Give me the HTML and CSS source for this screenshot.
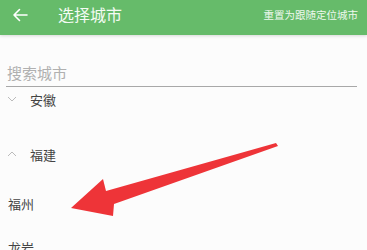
FILE: index.html
```html
<!DOCTYPE html>
<html lang="zh">
<head>
<meta charset="utf-8">
<link rel="stylesheet" href="styles.css">
</head>
<body>
<div class="app">
  <header class="bar">
    <svg class="back" width="16" height="14" viewBox="0 0 16 14"><path d="M15 7H2M7.5 1.5L2 7l5.5 5.5" fill="none" stroke="#fff" stroke-width="1.6" stroke-linecap="round" stroke-linejoin="round"/></svg>
    <span class="title">选择城市</span>
    <span class="reset">重置为跟随定位城市</span>
  </header>
  <div class="search">
    <span class="placeholder">搜索城市</span>
  </div>
  <div class="prov prov-a">
    <svg class="chev" width="10" height="6" viewBox="0 0 10 6"><path d="M1 1l4 4 4-4" fill="none" stroke="#bbb" stroke-width="1"/></svg>
    <span>安徽</span>
  </div>
  <div class="prov prov-b">
    <svg class="chev" width="10" height="6" viewBox="0 0 10 6"><path d="M1 5l4-4 4 4" fill="none" stroke="#bbb" stroke-width="1"/></svg>
    <span>福建</span>
  </div>
  <div class="city city-a">福州</div>
  <div class="city city-b">龙岩</div>
  <svg class="arrow" width="367" height="250" viewBox="0 0 367 250"><polygon points="71,208 103,179 106,191 276,143 278,146 114,204 113,216" fill="#ee3438"/></svg>
</div>
</body>
</html>
```
FILE: styles.css
```css
html, body { margin: 0; padding: 0; }
body {
  width: 367px; height: 250px; overflow: hidden;
  background: #fcfcfc;
  font-family: "Noto Sans CJK SC", "Noto Sans", sans-serif;
}
.app { position: relative; width: 367px; height: 250px; }
.bar {
  height: 35px;
  background: #66bb6a;
  display: flex; align-items: center;
  box-shadow: 0 1px 3px rgba(0,0,0,0.15);
  color: #fff;
}
.back { margin-left: 12px; margin-top: -6px; }
.title { margin-left: 30px; font-size: 16px; margin-top: -8px; color: #f4fbf4; }
.reset { margin-left: auto; margin-right: 9px; font-size: 10.5px; margin-top: -7px; color: #eef8ee; }
.search {
  margin: 27px 10px 0 6px;
  height: 24px;
  border-bottom: 1.5px solid #a8a8a8;
  display: flex; align-items: center;
}
.placeholder { font-size: 15px; color: #b0b0b0; margin-left: 1px; margin-top: -4px; }
.prov { display: flex; align-items: center; font-size: 13px; color: #444; }
.prov .chev { margin-left: 7px; margin-right: 13px; }
.prov-a { height: 20px; margin-top: 2px; }
.prov-b { height: 20px; margin-top: 35px; }
.city { font-size: 13px; color: #444; margin-left: 8px; }
.city-a { margin-top: 31px; line-height: 18px; }
.city-b { margin-top: 26px; line-height: 18px; }
.arrow { position: absolute; left: 0; top: 0; }
```
